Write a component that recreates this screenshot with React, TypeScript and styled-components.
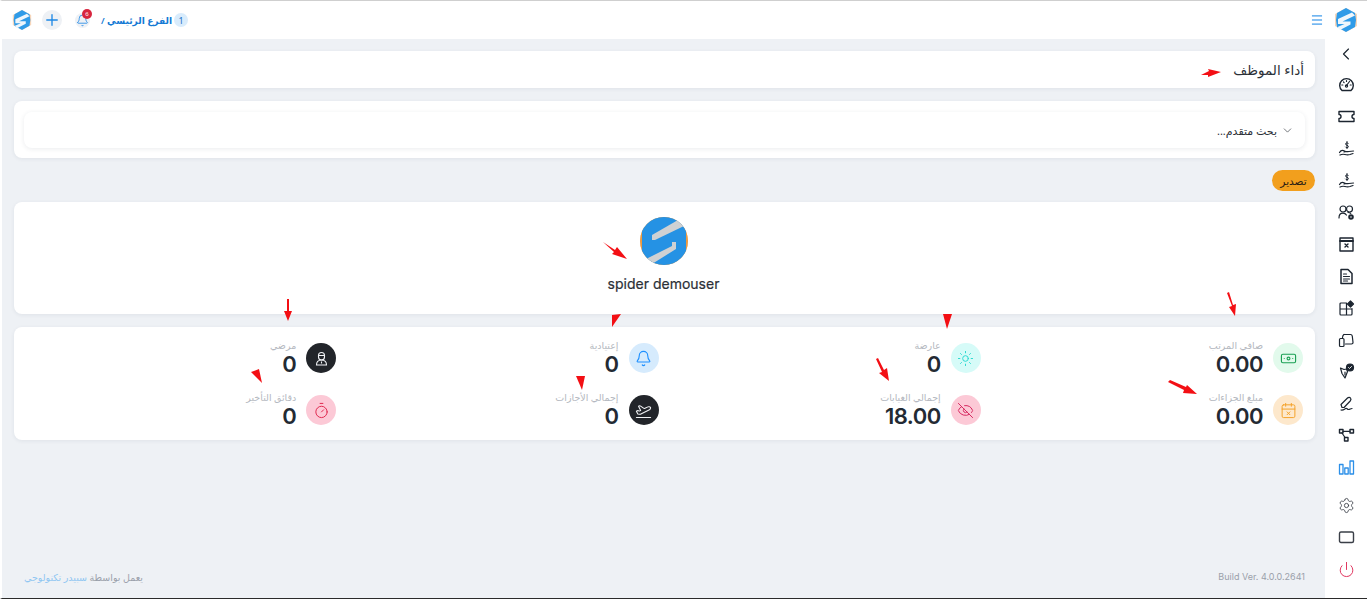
import React from "react";
import styled, { createGlobalStyle } from "styled-components";
import {
  BanknoteIcon,
  Bell,
  CalendarX,
  ChevronDown,
  ChevronLeft,
  EyeOff,
  Menu,
  PlaneTakeoff,
  Plus,
  Power,
  Settings,
  Sun,
  Timer,
} from "lucide-react";

const ARABIC = `"Noto Sans", "DejaVu Sans", "Liberation Sans", sans-serif`;

const GlobalStyle = createGlobalStyle`
  html, body {
    margin: 0;
    height: 100%;
    overflow: hidden;
    background: #fff;
  }

  * {
    box-sizing: border-box;
  }
`;

const Page = styled.div`
  position: relative;
  display: flex;
  flex-direction: column;
  width: 1367px;
  height: 599px;
  border-top: 1px solid #cfcfcf;
  border-left: 2px solid #fff;
  border-bottom: 1px solid #2a2a2a;
  background: #eef1f5;
  font-family: ${ARABIC};
  color: #232d42;
  overflow: hidden;
`;

const Header = styled.header`
  display: flex;
  align-items: center;
  height: 38px;
  padding: 0 9px 0 10px;
  background: #fff;
  flex: none;
`;

const HamburgerButton = styled.div`
  display: flex;
  margin-right: 10px;
  color: #0f82e6;
`;

const HeaderTools = styled.div`
  display: flex;
  align-items: center;
  margin-right: auto;
`;

const BranchPill = styled.span`
  display: flex;
  align-items: center;
  justify-content: center;
  width: 14px;
  height: 14px;
  border-radius: 50%;
  background: #d9ecfc;
  color: #1b6fc2;
  font-size: 9px;
`;

const BranchName = styled.span`
  margin-right: 2px;
  color: #1279d4;
  font-size: 9.1px;
  font-weight: 600;
  white-space: nowrap;
`;

const RoundButton = styled.div<{ $size: number; $gap: number }>`
  position: relative;
  display: flex;
  align-items: center;
  justify-content: center;
  width: ${(p) => p.$size}px;
  height: ${(p) => p.$size}px;
  margin-right: ${(p) => p.$gap}px;
  border-radius: 50%;
  background: #eef1f5;
  color: #1e88e5;
`;

const Badge = styled.span`
  position: absolute;
  top: -4px;
  left: 7px;
  width: 10px;
  height: 10px;
  border-radius: 50%;
  background: #d8263f;
  color: #fff;
  font-size: 6px;
  line-height: 10px;
  text-align: center;
`;

const LogoSlot = styled.div<{ $gap: number }>`
  display: flex;
  margin-right: ${(p) => p.$gap}px;
`;

const Body = styled.div`
  display: flex;
  flex: 1;
  min-height: 0;
`;

const Sidebar = styled.nav`
  display: flex;
  flex-direction: column;
  align-items: center;
  flex: none;
  width: 42px;
  background: #fff;
`;

const SideItem = styled.div<{ $mt?: number; $h?: number; $color?: string }>`
  display: flex;
  align-items: center;
  justify-content: center;
  flex: none;
  width: 100%;
  height: ${(p) => p.$h ?? 31.9}px;
  margin-top: ${(p) => p.$mt ?? 0}px;
  color: ${(p) => p.$color ?? "#1c2530"};
`;

const Main = styled.main`
  display: flex;
  flex-direction: column;
  flex: 1;
  min-width: 0;
  padding: 12px 10px 0 12px;
`;

const Card = styled.section`
  border-radius: 8px;
  background: #fff;
  box-shadow: 0 1px 4px rgba(35, 45, 66, 0.07);
`;

const TitleCard = styled(Card)`
  display: flex;
  align-items: center;
  height: 37px;
  padding: 0 11px;
`;

const PageTitle = styled.h1`
  margin: 0;
  font-size: 13.5px;
  font-weight: 500;
  color: #2b3037;
`;

const SearchCard = styled(Card)`
  margin-top: 13px;
  height: 57px;
  padding: 11px 10px 10px;
`;

const SearchBar = styled.div`
  display: flex;
  align-items: center;
  gap: 4px;
  height: 36px;
  padding: 0 11px;
  border-radius: 8px;
  background: #fff;
  box-shadow: 0 1px 5px rgba(35, 45, 66, 0.09);
  font-size: 11px;
  color: #2b3037;
`;

const ExportRow = styled.div`
  display: flex;
  margin-top: 12px;
`;

const ExportButton = styled.button`
  width: 43px;
  height: 21px;
  padding: 0;
  border: 0;
  border-radius: 11px;
  background: #f29f1d;
  color: #2a2015;
  font-family: inherit;
  font-size: 10.5px;
`;

const ProfileCard = styled(Card)`
  display: flex;
  flex-direction: column;
  align-items: center;
  height: 112px;
  margin-top: 11px;
  padding: 15px 2px 0 0;
`;

const UserName = styled.div`
  margin-top: 10px;
  font-family: Inter, "Liberation Sans", sans-serif;
  font-size: 14px;
  font-weight: 400;
  -webkit-text-stroke: 0.2px #2b3037;
  color: #2b3037;
`;

const StatsCard = styled(Card)`
  display: grid;
  grid-template-columns: repeat(4, 1fr);
  grid-auto-rows: 52px;
  height: 113px;
  margin-top: 13px;
  padding: 10px 12px 0 0;
`;

const Stat = styled.div`
  display: flex;
  gap: 10px;
  min-width: 0;
`;

const StatIcon = styled.div<{ $bg: string; $fg: string }>`
  display: flex;
  align-items: center;
  justify-content: center;
  flex: none;
  width: 30px;
  height: 30px;
  margin-top: 6px;
  border-radius: 50%;
  background: ${(p) => p.$bg};
  color: ${(p) => p.$fg};
`;

const StatText = styled.div`
  display: flex;
  flex-direction: column;
`;

const StatLabel = styled.span`
  margin-top: 2px;
  height: 14px;
  font-size: 9.5px;
  line-height: 14px;
  color: #b4b8c0;
  white-space: nowrap;
`;

const StatValue = styled.span`
  direction: ltr;
  text-align: right;
  font-family: Inter, "Liberation Sans", sans-serif;
  font-size: 22px;
  font-weight: 600;
  letter-spacing: -0.5px;
  line-height: 22px;
  color: #232a33;
`;

const Footer = styled.footer`
  display: flex;
  justify-content: space-between;
  margin-top: auto;
  padding: 0 10px 14px;
  font-size: 9.5px;
  color: #9aa0aa;
`;

const BuildTag = styled.span`
  direction: ltr;
  font-family: Inter, "Liberation Sans", sans-serif;
  font-size: 9px;
`;

const PoweredLink = styled.span`
  color: #8fc6f2;
`;

const Annotation = styled.svg`
  position: absolute;
  top: -1px;
  left: -2px;
  width: 1367px;
  height: 599px;
  pointer-events: none;
`;

function SpiderLogo({ size }: { size: number }) {
  return (
    <svg width={size} height={size} viewBox="0 0 48 48">
      <polygon points="24,0 46,12 46,36 24,48 2,36 2,12" fill="#f7d6ba" />
      <polygon points="24,0 42,10 44,24 42,38 24,48 6,38 4,24 6,10" fill="#2f9be8" />
      <polygon points="36,9 42,15 17,27 33,27 33,33 12,44 7,38 21,32 8,32 8,22" fill="#eef6fc" />
    </svg>
  );
}

function Avatar() {
  return (
    <svg width="48" height="48" viewBox="0 0 48 48">
      <defs>
        <clipPath id="avatarClip">
          <circle cx="24" cy="24" r="24" />
        </clipPath>
      </defs>
      <circle cx="24" cy="24" r="24" fill="#c9c9c9" />
      <g clipPath="url(#avatarClip)">
        <rect x="0" y="0" width="48" height="48" fill="#ee9a3f" />
        <rect x="2" y="0" width="44" height="48" fill="#2592e4" />
        <polygon points="38,3 44,9 15,23 12,23 12,18" fill="#cfd1d3" />
        <polygon points="32,25 36,25 36,32 12,47 6,42 32,29" fill="#cfd1d3" />
      </g>
    </svg>
  );
}

/* Outline icons for the side menu that no package has in this shape */
const Stroke = ({ children }: { children: React.ReactNode }) => (
  <svg
    width="17"
    height="17"
    viewBox="0 0 17 17"
    fill="none"
    stroke="currentColor"
    strokeWidth="1.2"
    strokeLinecap="round"
    strokeLinejoin="round"
  >
    {children}
  </svg>
);

const GaugeIcon = () => (
  <Stroke>
    <path d="M4 14.500a6.800 6.800 0 1 1 9 0z" strokeWidth="1.400" />
    <path d="m8.500 9.500 3-4M3.800 9h1M12.200 9h1M8.500 4.500v1M5.500 6l.6.6" />
    <circle cx="8.500" cy="10" r="1.100" />
  </Stroke>
);

const TicketIcon = () => (
  <Stroke>
    <path d="M1 3.500h15v3a2 2 0 0 0 0 4v3H1v-3a2 2 0 0 0 0-4z" strokeWidth="1.400" />
  </Stroke>
);

const HandMoneyIcon = () => (
  <Stroke>
    <path d="M1.500 12.500c1.500-2.500 3-2.500 5-1.500s3 .5 4.500.5l4.500-.5M2 15c2-1 3-1 5-.5s3 .5 5 0l3-1M6 12l3-.5" />
    <path d="M10.300 3.400C10 2.600 7.600 2.400 7.600 4s2.800 1 2.800 2.600-2.600 1.400-3 .5M9 1.500v7" strokeWidth="1" />
  </Stroke>
);

const UsersGearIcon = () => (
  <Stroke>
    <circle cx="5" cy="5" r="3" />
    <circle cx="11.500" cy="5" r="3" />
    <path d="M1 14c0-3 1.500-4.800 4-4.800 1.500 0 2.700.6 3.400 1.800M10 8.500c1 0 2 .2 2.700.8" />
    <circle cx="13" cy="13" r="1.800" strokeWidth="2" />
  </Stroke>
);

const CalendarBoxIcon = () => (
  <Stroke>
    <rect x="2" y="2" width="13" height="13" strokeWidth="1.400" />
    <path d="M2 5h13" strokeWidth="1.800" />
    <path d="m7 8 3 3m0-3-3 3" strokeWidth="1.400" />
  </Stroke>
);

const FileReportIcon = () => (
  <Stroke>
    <path d="M3 1.500h7l4 4v10H3z" strokeWidth="1.500" />
    <path d="M5.500 6h3M5.500 8.500h6M5.500 11h6M5.500 13h4" />
  </Stroke>
);

const GridPlusIcon = () => (
  <Stroke>
    <path d="M8.500 3H3a1 1 0 0 0-1 1v10a1 1 0 0 0 1 1h10a1 1 0 0 0 1-1V8.500M2 9h12M8.500 3v12" />
    <path d="m12.500 1 3 3-3 3-3-3z" fill="currentColor" />
  </Stroke>
);

const DeviceIcon = () => (
  <Stroke>
    <path d="M6 2.500h6.500c1 0 1.600.7 1.800 1.700l.7 6c.1 1-.5 1.800-1.500 1.800H7.500" />
    <path d="M6 2.500C5 3 4.600 4 4.500 5.500" />
    <rect x="1.500" y="6.500" width="4.500" height="8" rx="1" />
  </Stroke>
);

const PenBadgeIcon = () => (
  <Stroke>
    <path d="M2.500 5 6 6.500 8.500 6l1 2.500L7 15 4 10.500z" />
    <path d="M7 9v3" />
    <circle cx="12" cy="4.500" r="3.500" fill="currentColor" />
    <path d="m10.500 4.500 1 1 2-2" stroke="#fff" strokeWidth="0.900" />
  </Stroke>
);

const SignIcon = () => (
  <Stroke>
    <path d="M4 12.500 3 9.500 9.500 3c1-1 2.300-.9 3 0s.7 1.900-.3 3L6 12.500z" />
    <path d="M3 15c2 .5 3-.5 4.500-1.500s1.500 1 3 1 2-1 3.500-1" />
  </Stroke>
);

const NodesIcon = () => (
  <Stroke>
    <rect x="1.500" y="2.500" width="3.500" height="3.500" strokeWidth="1.400" />
    <rect x="12" y="2.500" width="3.500" height="3.500" strokeWidth="1.400" />
    <rect x="6.500" y="10.500" width="3.500" height="3.500" strokeWidth="1.400" />
    <path d="M5 4.300h7M4 6l3 4.500" />
  </Stroke>
);

const BarsIcon = () => (
  <Stroke>
    <path d="M1.500 15V5.500h3.500V15zM6.800 15V9h3.400v6zM12 15V2h3.500v13z" strokeWidth="1.300" />
  </Stroke>
);

const MonitorIcon = () => (
  <Stroke>
    <rect x="1.500" y="3" width="14" height="10.500" rx="1.500" strokeWidth="1.400" />
  </Stroke>
);

const NurseIcon = () => (
  <svg width="15" height="15" viewBox="0 0 15 15" fill="none" stroke="currentColor" strokeWidth="1.100">
    <path d="M4.500 4.500a3 3 0 0 1 6 0v1.500a3 3 0 0 1-6 0zM4.500 4.500h6" />
    <path d="M2.500 14c0-3 1.500-5 5-5s5 2 5 5zM7.500 10.500v2" />
  </svg>
);

const sideItems = [
  { key: "perf", icon: <GaugeIcon /> },
  { key: "ticket", icon: <TicketIcon /> },
  { key: "pay", icon: <HandMoneyIcon /> },
  { key: "pay2", icon: <HandMoneyIcon /> },
  { key: "users", icon: <UsersGearIcon /> },
  { key: "cal", icon: <CalendarBoxIcon /> },
  { key: "file", icon: <FileReportIcon /> },
  { key: "grid", icon: <GridPlusIcon /> },
  { key: "device", icon: <DeviceIcon /> },
  { key: "pen", icon: <PenBadgeIcon /> },
  { key: "sign", icon: <SignIcon /> },
  { key: "nodes", icon: <NodesIcon /> },
  { key: "bars", icon: <BarsIcon />, color: "#2b8fe8" },
  { key: "gear", icon: <Settings size={17} strokeWidth={1.2} />, mt: 6, color: "#3a3f47" },
  { key: "screen", icon: <MonitorIcon />, color: "#3a3f47" },
  { key: "power", icon: <Power size={17} strokeWidth={1.4} />, color: "#e0365f" },
];

const ICON_SIZE = 17;

// The grid runs right to left: first row, then second row, in reading order
const stats = [
  { label: "صافي المرتب", value: "0.00", bg: "#e2faec", fg: "#1aa053", icon: <BanknoteIcon size={ICON_SIZE} strokeWidth={1.6} /> },
  { label: "عارضة", value: "0", bg: "#d6fbf8", fg: "#2ddbd0", icon: <Sun size={ICON_SIZE} strokeWidth={1.4} /> },
  { label: "إعتيادية", value: "0", bg: "#d6ebfd", fg: "#1e90ff", icon: <Bell size={ICON_SIZE} strokeWidth={1.6} /> },
  { label: "مرضي", value: "0", bg: "#22252a", fg: "#f2f4f7", icon: <NurseIcon /> },
  { label: "مبلغ الجزاءات", value: "0.00", bg: "#fde8cc", fg: "#f4a229", icon: <CalendarX size={ICON_SIZE} strokeWidth={1.4} /> },
  { label: "إجمالي الغيابات", value: "18.00", bg: "#fcc9d6", fg: "#d6285f", icon: <EyeOff size={ICON_SIZE} strokeWidth={1.4} /> },
  { label: "إجمالي الأجازات", value: "0", bg: "#22252a", fg: "#f2f4f7", icon: <PlaneTakeoff size={ICON_SIZE} strokeWidth={1.5} /> },
  { label: "دقائق التأخير", value: "0", bg: "#fcc9d6", fg: "#e0284f", icon: <Timer size={ICON_SIZE} strokeWidth={1.4} /> },
];

// Red review marks painted over the screenshot
const arrows = [
  "1201,75 1209,71 1208,69 1221,72 1208,77 1208,75",
  "603,242 615,250 617,247 627,259 612,254 614,252",
  "1227,293 1232,306 1229,307 1235,316 1236,304 1233,305 1229,292",
  "1168,382 1184,390 1183,393 1197,394 1187,385 1186,387 1170,380",
  "943,314 952,314 947,329",
  "876,359 882,372 879,373 889,381 887,368 884,370 878,358",
  "621,314 612,315 612,327",
  "576,376 585,376 582,390",
  "287,299 287,311 284,311 288,321 292,311 289,311 289,299",
  "251,372 259,369 262,383",
];

export default function App() {
  return (
    <Page dir="rtl">
      <GlobalStyle />
      <Header>
        <SpiderLogo size={24} />
        <HamburgerButton>
          <Menu size={14} strokeWidth={1.7} />
        </HamburgerButton>
        <HeaderTools>
          <BranchPill>1</BranchPill>
          <BranchName>الفرع الرئيسي /</BranchName>
          <RoundButton $size={15} $gap={11}>
            <Bell size={13} strokeWidth={1.5} />
            <Badge>6</Badge>
          </RoundButton>
          <RoundButton $size={20} $gap={13}>
            <Plus size={18} strokeWidth={1.8} />
          </RoundButton>
          <LogoSlot $gap={10}>
            <SpiderLogo size={20} />
          </LogoSlot>
        </HeaderTools>
      </Header>
      <Body>
        <Sidebar>
          <SideItem $h={30}>
            <ChevronLeft size={20} strokeWidth={1.4} />
          </SideItem>
          {sideItems.map((item) => (
            <SideItem key={item.key} $mt={item.mt} $color={item.color}>
              {item.icon}
            </SideItem>
          ))}
        </Sidebar>
        <Main>
          <TitleCard>
            <PageTitle>أداء الموظف</PageTitle>
          </TitleCard>
          <SearchCard>
            <SearchBar>
              <ChevronDown size={13} strokeWidth={1.2} />
              بحث متقدم...
            </SearchBar>
          </SearchCard>
          <ExportRow>
            <ExportButton>تصدير</ExportButton>
          </ExportRow>
          <ProfileCard>
            <Avatar />
            <UserName>spider demouser</UserName>
          </ProfileCard>
          <StatsCard>
            {stats.map((s) => (
              <Stat key={s.label}>
                <StatIcon $bg={s.bg} $fg={s.fg}>
                  {s.icon}
                </StatIcon>
                <StatText>
                  <StatLabel>{s.label}</StatLabel>
                  <StatValue>{s.value}</StatValue>
                </StatText>
              </Stat>
            ))}
          </StatsCard>
          <Footer>
            <BuildTag>Build Ver. 4.0.0.2641</BuildTag>
            <span>
              يعمل بواسطة <PoweredLink>سبيدر تكنولوجي</PoweredLink>
            </span>
          </Footer>
        </Main>
      </Body>
      <Annotation viewBox="0 0 1367 599">
        {arrows.map((pts) => (
          <polygon key={pts} points={pts} fill="#f30f14" />
        ))}
      </Annotation>
    </Page>
  );
}
